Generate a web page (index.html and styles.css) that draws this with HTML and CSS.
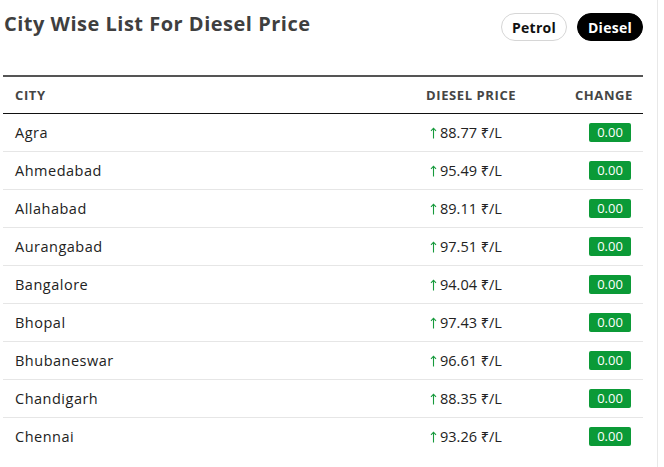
FILE: index.html
```html
<!DOCTYPE html>
<html>
<head>
<meta charset="utf-8">
<link rel="stylesheet" href="styles.css">
</head>
<body>
<div class="page">
  <div class="head">
    <h2 class="title">City Wise List For Diesel Price</h2>
    <div class="toggles">
      <button class="pill">Petrol</button>
      <button class="pill active">Diesel</button>
    </div>
  </div>
  <table class="list">
    <thead>
      <tr><th class="c-city">CITY</th><th class="c-price">DIESEL PRICE</th><th class="c-change">CHANGE</th></tr>
    </thead>
    <tbody>
      <tr><td class="c-city">Agra</td><td class="c-price"><svg class="up" viewBox="0 0 7 12"><path d="M3.5 11.5V1.2M1 3.8L3.5 1.2L6 3.8"/></svg>88.77 &#8377;/L</td><td class="c-change"><span class="badge">0.00</span></td></tr>
      <tr><td class="c-city">Ahmedabad</td><td class="c-price"><svg class="up" viewBox="0 0 7 12"><path d="M3.5 11.5V1.2M1 3.8L3.5 1.2L6 3.8"/></svg>95.49 &#8377;/L</td><td class="c-change"><span class="badge">0.00</span></td></tr>
      <tr><td class="c-city">Allahabad</td><td class="c-price"><svg class="up" viewBox="0 0 7 12"><path d="M3.5 11.5V1.2M1 3.8L3.5 1.2L6 3.8"/></svg>89.11 &#8377;/L</td><td class="c-change"><span class="badge">0.00</span></td></tr>
      <tr><td class="c-city">Aurangabad</td><td class="c-price"><svg class="up" viewBox="0 0 7 12"><path d="M3.5 11.5V1.2M1 3.8L3.5 1.2L6 3.8"/></svg>97.51 &#8377;/L</td><td class="c-change"><span class="badge">0.00</span></td></tr>
      <tr><td class="c-city">Bangalore</td><td class="c-price"><svg class="up" viewBox="0 0 7 12"><path d="M3.5 11.5V1.2M1 3.8L3.5 1.2L6 3.8"/></svg>94.04 &#8377;/L</td><td class="c-change"><span class="badge">0.00</span></td></tr>
      <tr><td class="c-city">Bhopal</td><td class="c-price"><svg class="up" viewBox="0 0 7 12"><path d="M3.5 11.5V1.2M1 3.8L3.5 1.2L6 3.8"/></svg>97.43 &#8377;/L</td><td class="c-change"><span class="badge">0.00</span></td></tr>
      <tr><td class="c-city">Bhubaneswar</td><td class="c-price"><svg class="up" viewBox="0 0 7 12"><path d="M3.5 11.5V1.2M1 3.8L3.5 1.2L6 3.8"/></svg>96.61 &#8377;/L</td><td class="c-change"><span class="badge">0.00</span></td></tr>
      <tr><td class="c-city">Chandigarh</td><td class="c-price"><svg class="up" viewBox="0 0 7 12"><path d="M3.5 11.5V1.2M1 3.8L3.5 1.2L6 3.8"/></svg>88.35 &#8377;/L</td><td class="c-change"><span class="badge">0.00</span></td></tr>
      <tr><td class="c-city">Chennai</td><td class="c-price"><svg class="up" viewBox="0 0 7 12"><path d="M3.5 11.5V1.2M1 3.8L3.5 1.2L6 3.8"/></svg>93.26 &#8377;/L</td><td class="c-change"><span class="badge">0.00</span></td></tr>
    </tbody>
  </table>
</div>
</body>
</html>
```
FILE: styles.css
```css
html, body {
  margin: 0;
  padding: 0;
  background: #fff;
}
body {
  font-family: "Open Sans", "Noto Sans", sans-serif;
  color: #222;
  overflow: hidden;
}
.page {
  width: 658px;
  height: 467px;
  box-sizing: border-box;
  padding-left: 3px;
  padding-right: 14px;
  border-right: 1px solid #e8e8e8;
}
.head {
  display: flex;
  justify-content: space-between;
  align-items: flex-start;
  height: 75px;
}
.title {
  margin: 10px 0 0 1px;
  font-size: 20px;
  font-weight: 700;
  color: #3f3f3f;
  line-height: 28px;
  letter-spacing: 0.5px;
}
.toggles {
  display: flex;
  gap: 10px;
  margin-top: 13px;
}
.pill {
  height: 28px;
  width: 66px;
  border-radius: 14px;
  border: 1px solid #d6d6d6;
  background: #fff;
  color: #111;
  font-family: inherit;
  font-size: 14px;
  font-weight: 700;
  letter-spacing: 0.3px;
  padding: 0;
  cursor: pointer;
}
.pill.active {
  background: #000;
  border-color: #000;
  color: #fff;
}
.list {
  width: 640px;
  border-collapse: collapse;
  border-top: 2px solid #555;
}
.list th {
  height: 36px;
  padding: 0 12px;
  font-size: 13px;
  font-weight: 700;
  letter-spacing: 0.6px;
  color: #454545;
  text-align: left;
  border-bottom: 1px solid #111;
  vertical-align: middle;
}
.list td {
  height: 36px;
  padding: 0 12px 1px;
  font-size: 14.5px;
  color: #222;
  border-bottom: 1px solid #e6e6e6;
  vertical-align: middle;
}
.list td.c-city {
  letter-spacing: 0.5px;
}
.list tbody tr:last-child td {
  border-bottom: none;
}
.c-city { width: 387px; }
.list th.c-price { width: 102px; text-align: left; }
.list td.c-price { padding-left: 16px; }
.list .c-change { text-align: right; padding-right: 12px; }
.list th.c-change { padding-right: 10px; }
.up {
  width: 7px;
  height: 12px;
  margin-right: 3px;
  vertical-align: -1px;
  fill: none;
  stroke: #169a3c;
  stroke-width: 1.1;
}
.badge {
  display: inline-block;
  width: 42px;
  height: 19px;
  line-height: 19px;
  text-align: center;
  background: #0b9a37;
  color: #fff;
  font-size: 13px;
  border-radius: 2px;
}
```
